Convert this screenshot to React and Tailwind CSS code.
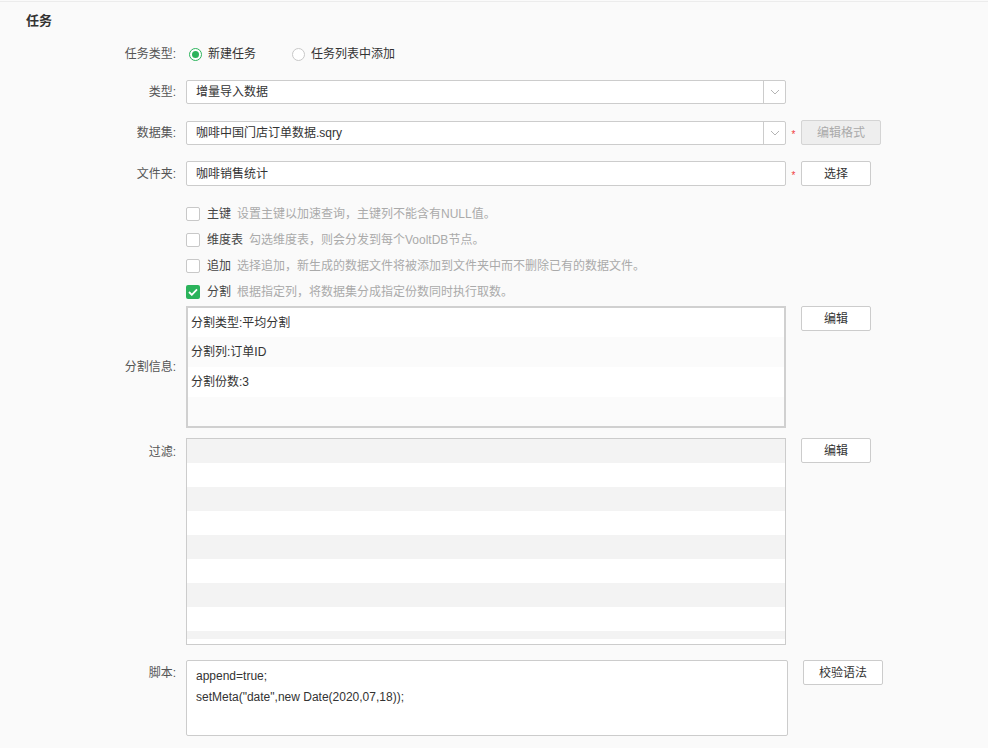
import React from "react";

const font = { fontFamily: '"Liberation Sans", "Noto Sans CJK SC", sans-serif' };

function Label({ children, className = "" }) {
  return (
    <div className={"w-[176px] shrink-0 text-right text-[12px] text-[#555] " + className}>
      {children}
    </div>
  );
}

function Btn({ children, w = "w-[70px]", disabled = false }) {
  return (
    <div
      className={
        "h-[25px] flex items-center justify-center rounded-[2px] border text-[12px] " +
        w +
        (disabled
          ? " bg-[#eeeeee] border-[#d4d4d4] text-[#aaaaaa]"
          : " bg-white border-[#cccccc] text-[#333]")
      }
    >
      {children}
    </div>
  );
}

function Chevron() {
  return (
    <svg width="10" height="6" viewBox="0 0 10 6" fill="none">
      <path d="M1 1l4 4 4-4" stroke="#b5b5b5" strokeWidth="1" />
    </svg>
  );
}

function Star() {
  return <div className="w-[15px] text-center text-[10px] text-[#f04040] leading-none pt-[4px]">*</div>;
}

function Check({ checked, title, hint }) {
  return (
    <div className="h-[26px] flex items-center">
      {checked ? (
        <div className="w-[14px] h-[14px] rounded-[2px] bg-[#2bb35b] flex items-center justify-center">
          <svg width="10" height="8" viewBox="0 0 10 8" fill="none">
            <path d="M1 4l2.8 2.8L9 1.3" stroke="white" strokeWidth="1.8" />
          </svg>
        </div>
      ) : (
        <div className="w-[14px] h-[14px] rounded-[2px] border border-[#c8c8c8] bg-white" />
      )}
      <span className="ml-[7px] text-[12px] text-[#444]">{title}</span>
      <span className="ml-[6px] text-[12px] text-[#aaaaaa]">{hint}</span>
    </div>
  );
}

export default function App() {
  const filterRows = [0, 1, 2, 3, 4, 5, 6, 7];
  return (
    <div style={font} className="w-[988px] h-[748px] bg-[#fafafa] overflow-hidden">
      <div className="h-[1px]" />
      <div className="h-[1px] bg-[#ececec]" />
      <div className="pl-[26px] mt-[11px] h-[16px] leading-[16px] text-[13px] font-bold text-[#333]">任务</div>

      {/* task type */}
      <div className="mt-[15px] h-[20px] flex items-center">
        <Label>任务类型:</Label>
        <div className="ml-[13px] flex items-center">
          <div className="w-[13px] h-[13px] rounded-full border border-[#2bb35b] bg-white flex items-center justify-center">
            <div className="w-[7px] h-[7px] rounded-full bg-[#2bb35b]" />
          </div>
          <span className="ml-[6px] text-[12px] text-[#333]">新建任务</span>
          <div className="ml-[36px] w-[13px] h-[13px] rounded-full border border-[#c8c8c8] bg-white" />
          <span className="ml-[6px] text-[12px] text-[#333]">任务列表中添加</span>
        </div>
      </div>

      {/* type */}
      <div className="mt-[16px] flex items-center">
        <Label>类型:</Label>
        <div className="ml-[10px] w-[600px] h-[24px] flex border border-[#cccccc] rounded-[2px] bg-white">
          <div className="flex-1 flex items-center pl-[9px] text-[12px] text-[#333]">增量导入数据</div>
          <div className="w-[22px] border-l border-[#cccccc] flex items-center justify-center">
            <Chevron />
          </div>
        </div>
      </div>

      {/* dataset */}
      <div className="mt-[16px] flex items-center">
        <Label>数据集:</Label>
        <div className="ml-[10px] w-[600px] h-[24px] flex border border-[#cccccc] rounded-[2px] bg-white">
          <div className="flex-1 flex items-center pl-[9px] text-[12px] text-[#333]">咖啡中国门店订单数据.sqry</div>
          <div className="w-[22px] border-l border-[#cccccc] flex items-center justify-center">
            <Chevron />
          </div>
        </div>
        <Star />
        <Btn w="w-[80px]" disabled>编辑格式</Btn>
      </div>

      {/* folder */}
      <div className="mt-[16px] flex items-center">
        <Label>文件夹:</Label>
        <div className="ml-[10px] w-[600px] h-[25px] flex items-center pl-[9px] border border-[#cccccc] rounded-[2px] bg-white text-[12px] text-[#333]">
          咖啡销售统计
        </div>
        <Star />
        <Btn>选择</Btn>
      </div>

      {/* checkboxes */}
      <div className="mt-[15px] ml-[186px] flex flex-col">
        <Check title="主键" hint="设置主键以加速查询，主键列不能含有NULL值。" />
        <Check title="维度表" hint="勾选维度表，则会分发到每个VooltDB节点。" />
        <Check title="追加" hint="选择追加，新生成的数据文件将被添加到文件夹中而不删除已有的数据文件。" />
        <Check checked title="分割" hint="根据指定列，将数据集分成指定份数同时执行取数。" />
      </div>

      {/* split info */}
      <div className="mt-[1px] flex items-start">
        <Label className="self-center">分割信息:</Label>
        <div className="ml-[10px] w-[600px] h-[122px] border-2 border-[#d0d0d0] bg-white flex flex-col text-[12px] text-[#333] overflow-hidden">
          <div className="h-[29px] flex items-center pl-[3px]">分割类型:平均分割</div>
          <div className="h-[30px] flex items-center pl-[3px] bg-[#fbfbfb]">分割列:订单ID</div>
          <div className="h-[30px] flex items-center pl-[3px]">分割份数:3</div>
          <div className="flex-1 bg-[#fbfbfb]" />
        </div>
        <div className="ml-[15px]">
          <Btn>编辑</Btn>
        </div>
      </div>

      {/* filter */}
      <div className="mt-[10px] flex items-start">
        <Label className="pt-[5px]">过滤:</Label>
        <div className="ml-[10px] w-[600px] h-[207px] border border-[#cccccc] bg-white flex flex-col overflow-hidden">
          {filterRows.map((i) => (
            <div key={i} className={"h-[24px] shrink-0 " + (i % 2 === 0 ? "bg-[#f3f3f3]" : "bg-white")} />
          ))}
          <div className="h-[8px] shrink-0 bg-[#f3f3f3]" />
        </div>
        <div className="ml-[15px]">
          <Btn>编辑</Btn>
        </div>
      </div>

      {/* script */}
      <div className="mt-[15px] flex items-start">
        <Label className="pt-[4px]">脚本:</Label>
        <div className="ml-[10px] w-[602px] h-[76px] border border-[#cccccc] rounded-[2px] bg-white pl-[9px] pt-[5px] text-[12px] leading-[21px] text-[#333]">
          <div>append=true;</div>
          <div>setMeta("date",new Date(2020,07,18));</div>
        </div>
        <div className="ml-[15px]">
          <Btn w="w-[80px]">校验语法</Btn>
        </div>
      </div>
    </div>
  );
}
